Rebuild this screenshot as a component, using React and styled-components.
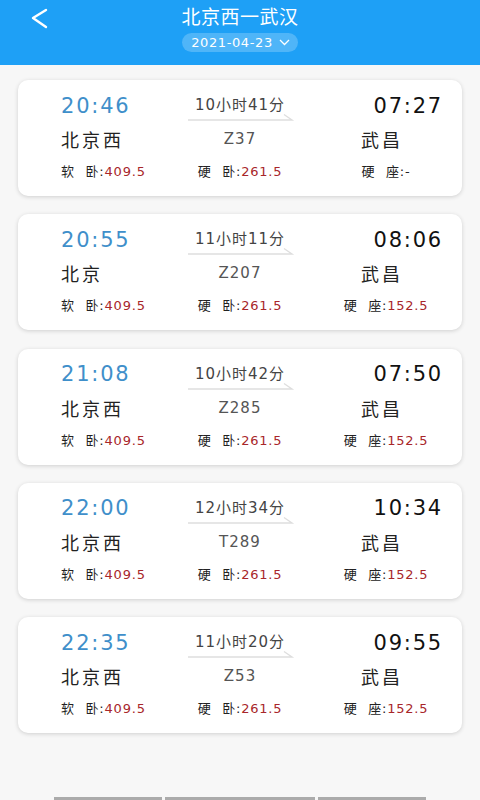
import React from 'react'
import styled, { createGlobalStyle } from 'styled-components'

const GlobalStyle = createGlobalStyle`
  html, body {
    margin: 0;
    padding: 0;
    background: #f7f7f7;
  }
  body {
    font-family: "DejaVu Sans", "Noto Sans CJK SC", sans-serif;
  }
`

const Page = styled.div`
  min-height: 800px;
  display: flex;
  flex-direction: column;
  background: #f7f7f7;
`

const Header = styled.div`
  position: relative;
  height: 65px;
  background: #1ea0f6;
  display: flex;
  flex-direction: column;
  align-items: center;
  color: #fff;
`

const BackButton = styled.div`
  position: absolute;
  left: 30px;
  top: 7px;
  width: 20px;
  height: 22px;
`

const Title = styled.div`
  margin-top: 5px;
  font-family: "Noto Sans CJK SC", sans-serif;
  font-size: 19px;
  line-height: 22px;
  letter-spacing: 0.5px;
`

const DatePill = styled.div`
  margin-top: 6px;
  height: 19px;
  padding: 0 8px 0 9px;
  border-radius: 10px;
  background: rgba(255, 255, 255, 0.22);
  display: flex;
  align-items: center;
  gap: 6px;
  font-size: 13px;
  letter-spacing: 0.6px;
`

const List = styled.div`
  padding: 15px 18px 0;
  display: flex;
  flex-direction: column;
  gap: 18.25px;
`

const Card = styled.div`
  background: #fff;
  border-radius: 10px;
  box-shadow: 0 1px 4px rgba(0, 0, 0, 0.16);
  padding: 10px 19px 12px;
`

const Row = styled.div`
  display: grid;
  grid-template-columns: 1fr 150px 1fr;
  height: ${p => p.$h}px;
  margin-top: ${p => p.$mt || 0}px;
  align-items: center;
`

const Cell = styled.div`
  display: flex;
  justify-content: ${p => p.$justify || 'flex-start'};
  padding-left: ${p => p.$pad || 0}px;
`

const Time = styled.div`
  font-size: 21px;
  line-height: 30px;
  letter-spacing: 1.8px;
  color: ${p => (p.$depart ? '#3f8fca' : '#111')};
`

const Duration = styled.div`
  display: flex;
  flex-direction: column;
  align-items: center;
  width: 100%;
`

const DurationText = styled.div`
  margin-top: 4px;
  font-size: 15px;
  line-height: 22px;
  letter-spacing: 1px;
  color: #444;
`

const Station = styled.div`
  font-family: "Noto Sans CJK SC", sans-serif;
  font-size: 18px;
  line-height: 26px;
  letter-spacing: 3px;
  color: #222;
`

const TrainNo = styled.div`
  font-size: 15px;
  line-height: 26px;
  letter-spacing: 1px;
  color: #555;
`

const Seat = styled.div`
  font-size: 13px;
  line-height: 24px;
  letter-spacing: 0.8px;
  color: #222;
  white-space: pre;
`

const Price = styled.span`
  color: #a8262a;
`

const BottomBar = styled.div`
  margin-top: auto;
  display: flex;
  justify-content: center;
  gap: 3px;
`

const BarPiece = styled.div`
  width: ${p => p.$w}px;
  height: 3px;
  background: #ababab;
`

const trains = [
  { dep: '20:46', arr: '07:27', dur: '10小时41分', from: '北京西', no: 'Z37', to: '武昌', soft: '409.5', hard: '261.5', seat: '-' },
  { dep: '20:55', arr: '08:06', dur: '11小时11分', from: '北京', no: 'Z207', to: '武昌', soft: '409.5', hard: '261.5', seat: '152.5' },
  { dep: '21:08', arr: '07:50', dur: '10小时42分', from: '北京西', no: 'Z285', to: '武昌', soft: '409.5', hard: '261.5', seat: '152.5' },
  { dep: '22:00', arr: '10:34', dur: '12小时34分', from: '北京西', no: 'T289', to: '武昌', soft: '409.5', hard: '261.5', seat: '152.5' },
  { dep: '22:35', arr: '09:55', dur: '11小时20分', from: '北京西', no: 'Z53', to: '武昌', soft: '409.5', hard: '261.5', seat: '152.5' },
]

const GAP = '\u2002\u2009'

const Arrow = () => (
  <svg width="105" height="5" viewBox="0 0 105 5" overflow="visible">
    <path d="M0 4 H104 L96 -1.5" fill="none" stroke="#dedede" strokeWidth="1.4" />
  </svg>
)

const TrainCard = ({ t }) => (
  <Card>
    <Row $h={30}>
      <Cell $pad={24}>
        <Time $depart>{t.dep}</Time>
      </Cell>
      <Cell $justify="center">
        <Duration>
          <DurationText>{t.dur}</DurationText>
          <Arrow />
        </Duration>
      </Cell>
      <Cell $justify="flex-end">
        <Time>{t.arr}</Time>
      </Cell>
    </Row>
    <Row $h={26} $mt={6}>
      <Cell $pad={24}>
        <Station>{t.from}</Station>
      </Cell>
      <Cell $justify="center">
        <TrainNo>{t.no}</TrainNo>
      </Cell>
      <Cell $pad={46}>
        <Station>{t.to}</Station>
      </Cell>
    </Row>
    <Row $h={24} $mt={8}>
      <Cell $pad={24}>
        <Seat>软{GAP}卧:<Price>{t.soft}</Price></Seat>
      </Cell>
      <Cell $justify="center">
        <Seat>硬{GAP}卧:<Price>{t.hard}</Price></Seat>
      </Cell>
      <Cell $justify="center" $pad={14}>
        <Seat>硬{GAP}座:{t.seat === '-' ? '-' : <Price>{t.seat}</Price>}</Seat>
      </Cell>
    </Row>
  </Card>
)

export default function App() {
  return (
    <Page>
      <GlobalStyle />
      <Header>
        <BackButton>
          <svg width="20" height="22" viewBox="0 0 20 22">
            <path d="M16 3 L3 11 L16 20" fill="none" stroke="#fff" strokeWidth="2.4" strokeLinecap="round" strokeLinejoin="round" />
          </svg>
        </BackButton>
        <Title>北京西一武汉</Title>
        <DatePill>
          2021-04-23
          <svg width="11" height="7" viewBox="0 0 11 7">
            <path d="M1 1 L5.5 5.5 L10 1" fill="none" stroke="#fff" strokeWidth="1.3" />
          </svg>
        </DatePill>
      </Header>
      <List>
        {trains.map(t => (
          <TrainCard key={t.no} t={t} />
        ))}
      </List>
      <BottomBar>
        <BarPiece $w={108} />
        <BarPiece $w={150} />
        <BarPiece $w={108} />
      </BottomBar>
    </Page>
  )
}
